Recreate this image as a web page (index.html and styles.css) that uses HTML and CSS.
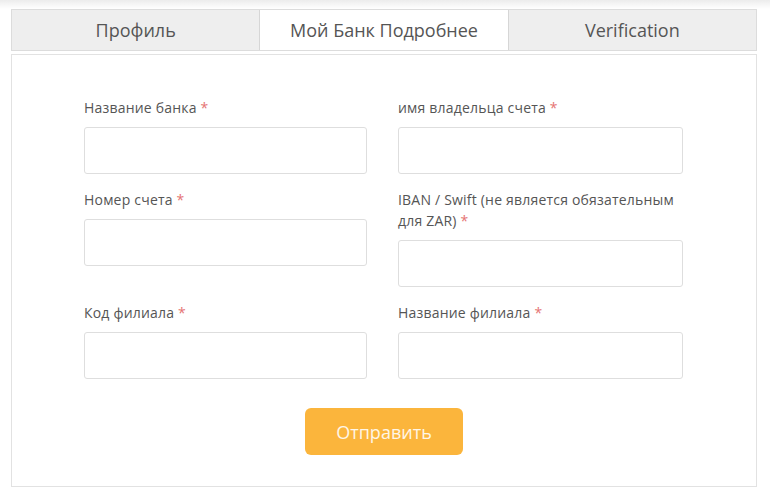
FILE: index.html
```html
<!DOCTYPE html>
<html lang="ru">
<head>
<meta charset="utf-8">
<link rel="stylesheet" href="styles.css">
</head>
<body>
<div class="page">
  <div class="tabs">
    <div class="tab">Профиль</div>
    <div class="tab active">Мой Банк Подробнее</div>
    <div class="tab">Verification</div>
  </div>
  <div class="panel">
    <form class="form">
      <div class="field">
        <label class="label">Название банка <span class="req">*</span></label>
        <input class="input" type="text">
      </div>
      <div class="field">
        <label class="label">имя владельца счета <span class="req">*</span></label>
        <input class="input" type="text">
      </div>
      <div class="field">
        <label class="label">Номер счета <span class="req">*</span></label>
        <input class="input" type="text">
      </div>
      <div class="field">
        <label class="label">IBAN / Swift (не является обязательным для ZAR) <span class="req">*</span></label>
        <input class="input" type="text">
      </div>
      <div class="field">
        <label class="label">Код филиала <span class="req">*</span></label>
        <input class="input" type="text">
      </div>
      <div class="field">
        <label class="label">Название филиала <span class="req">*</span></label>
        <input class="input" type="text">
      </div>
    </form>
    <div class="actions">
      <button class="submit" type="button">Отправить</button>
    </div>
  </div>
</div>
</body>
</html>
```
FILE: styles.css
```css
* { box-sizing: border-box; }
html, body { margin: 0; padding: 0; }
body {
  background: linear-gradient(#ececec 0, #f7f7f7 5px, #ffffff 9px, #ffffff 100%);
  font-family: "Open Sans", "Noto Sans", sans-serif;
  color: #555;
  width: 770px;
  height: 501px;
  overflow: hidden;
}
.page {
  padding: 9px 13px 0 11px;
}
.tabs {
  display: flex;
  border: 1px solid #dcdcdc;
  height: 42px;
}
.tab {
  flex: 1;
  background: #eeeeee;
  display: flex;
  align-items: center;
  justify-content: center;
  font-size: 18px;
  color: #555;
}
.tab + .tab { border-left: 1px solid #d6d6d6; }
.tab.active { background: #ffffff; }
.panel {
  margin-top: 3px;
  border: 1px solid #e2e2e2;
  height: 433px;
  padding: 42px 72px 0 72px;
}
.form {
  display: grid;
  grid-template-columns: 283px 285px;
  column-gap: 31px;
  row-gap: 15px;
  align-items: start;
}
.field {
  display: flex;
  flex-direction: column;
}
.label {
  font-size: 14px;
  letter-spacing: 0.2px;
  line-height: 21px;
  color: #555;
  margin-bottom: 9px;
}
.req { color: #e57373; }
.input {
  height: 47px;
  border: 1px solid #dedede;
  border-radius: 3px;
  background: #fff;
  width: 100%;
}
.actions {
  display: flex;
  justify-content: center;
  margin-top: 29px;
}
.submit {
  width: 158px;
  height: 47px;
  border: 0;
  border-radius: 6px;
  background: #fbb53c;
  color: #fff6e6;
  font-family: "Open Sans", "Noto Sans", sans-serif;
  font-size: 18px;
}
```
